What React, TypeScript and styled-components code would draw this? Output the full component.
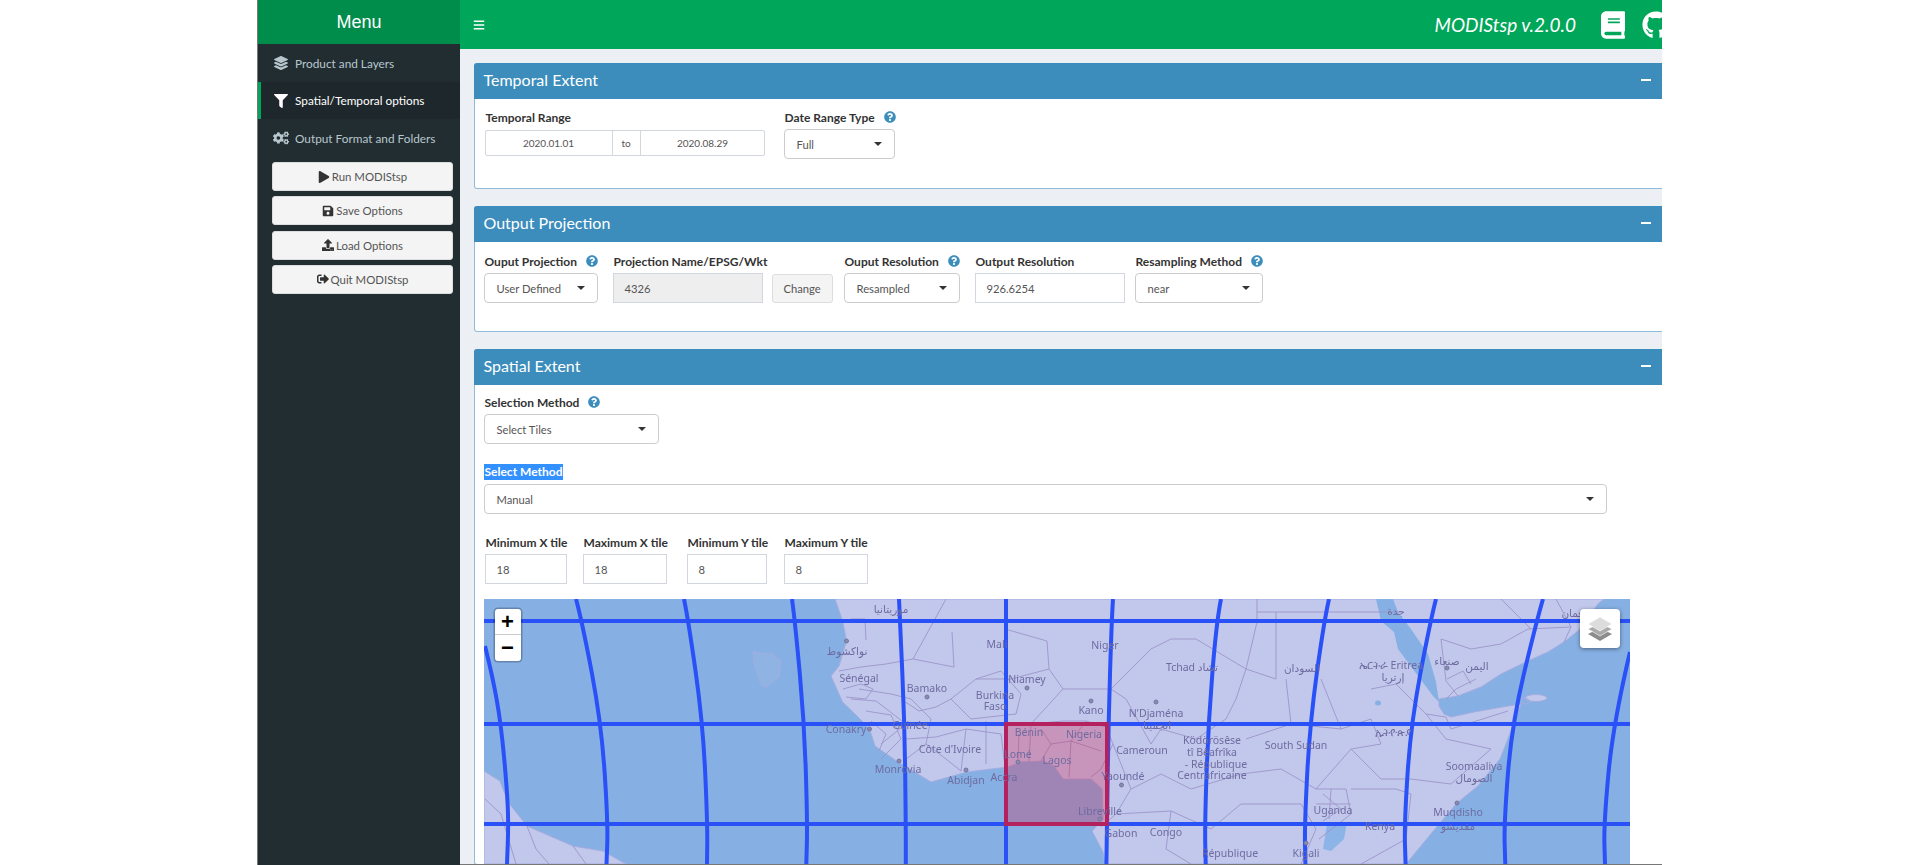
import React, { FC, ReactNode } from 'react';
import styled, { createGlobalStyle } from 'styled-components';
import {
	FaBars,
	FaBook,
	FaCogs,
	FaFilter,
	FaGithub,
	FaLayerGroup,
	FaPlay,
	FaQuestionCircle,
	FaSave,
	FaSignOutAlt,
	FaUpload,
} from 'react-icons/fa';

const GlobalStyle = createGlobalStyle`
	html, body {
		margin: 0;
		padding: 0;
		background: #fff;
		overflow: hidden;
	}
	* {
		box-sizing: border-box;
	}
`;

const Page = styled.div`
	display: flex;
	width: 1405px;
	height: 865px;
	margin-left: 257px;
	border-left: 1.5px solid #777;
	overflow: hidden;
	font-family: 'Lato', 'Liberation Sans', sans-serif;
`;

const Sidebar = styled.aside`
	flex: 0 0 202px;
	background: #222d32;
	display: flex;
	flex-direction: column;
`;

const Logo = styled.div`
	height: 44px;
	background: #008d4c;
	color: #fff;
	font-family: 'Liberation Sans', sans-serif;
	font-size: 18px;
	display: flex;
	align-items: center;
	justify-content: center;
`;

const NavItem = styled.div<{ $active?: boolean }>`
	height: ${(p) => (p.$active ? 37 : 38)}px;
	display: flex;
	align-items: center;
	column-gap: 6px;
	padding-left: ${(p) => (p.$active ? 12 : 15)}px;
	font-size: 11.8px;
	color: ${(p) => (p.$active ? '#fff' : '#b8c7ce')};
	background: ${(p) => (p.$active ? '#1e282c' : 'transparent')};
	border-left: ${(p) => (p.$active ? '3px solid #00a65a' : 'none')};

	svg {
		width: 16px;
		height: 14px;
		flex: none;
	}
`;

const SideButtons = styled.div`
	display: flex;
	flex-direction: column;
	row-gap: 5.3px;
	padding: 5px 7px 0 14px;
`;

const SideButton = styled.div`
	height: 29px;
	background: #f4f4f4;
	border: 1px solid #ddd;
	border-radius: 3px;
	color: #555;
	font-size: 11.4px;
	display: flex;
	align-items: center;
	justify-content: center;
	column-gap: 2px;

	svg {
		width: 12px;
		height: 12px;
		color: #333;
	}
`;

const Main = styled.main`
	flex: 0 0 1222px;
	height: 865px;
	background: #ecf0f5;
	border-bottom: 1px solid #777;
	overflow: hidden;
`;

const TopBar = styled.header`
	height: 49px;
	background: #00a65a;
	color: #fff;
	display: flex;
	align-items: center;
	padding: 0 12px 0 13px;
`;

const Burger = styled(FaBars)`
	width: 12px;
	height: 12px;
`;

const AppVersion = styled.div`
	margin-left: auto;
	font-size: 19px;
	font-style: italic;
	margin-right: 25px;
`;

const BookIcon = styled(FaBook)`
	width: 24px;
	height: 28px;
	margin-right: 17px;
`;

const GithubIcon = styled(FaGithub)`
	width: 28px;
	height: 28px;
`;

const Content = styled.div`
	display: flex;
	flex-direction: column;
	row-gap: 17px;
	padding: 14px 14px 0;
`;

const Box = styled.section<{ $height?: number }>`
	height: ${(p) => (p.$height ? `${p.$height}px` : 'auto')};
	background: #fff;
	border: 1.5px solid #8fbcdb;
	border-top: none;
	border-radius: 3px;
`;

const BoxHeader = styled.div`
	height: 36px;
	margin: 0 -1.5px;
	background: #3c8dbc;
	color: #fff;
	border-radius: 3px 3px 0 0;
	font-size: 16px;
	display: flex;
	align-items: center;
	justify-content: space-between;
	padding: 0 18px 3px 10px;
`;

const Collapse = styled.span`
	width: 10px;
	height: 2px;
	background: #fff;
`;

const BoxRow = styled.div<{ $top?: number; $left?: number }>`
	display: flex;
	align-items: flex-start;
	padding-top: ${(p) => p.$top ?? 0}px;
	padding-left: ${(p) => p.$left ?? 0}px;
`;

const Field = styled.div<{ $width: number; $gap?: number }>`
	flex: 0 0 ${(p) => p.$width}px;
	width: ${(p) => p.$width}px;
	margin-left: ${(p) => p.$gap ?? 0}px;
`;

const Label = styled.div`
	height: 16px;
	margin-bottom: 4px;
	padding-left: 1px;
	font-size: 12px;
	font-weight: 700;
	color: #333;
	white-space: nowrap;
	display: flex;
	align-items: center;
`;

const Help = styled(FaQuestionCircle)`
	width: 12px;
	height: 12px;
	color: #3c8dbc;
	margin-left: 9px;
	flex: none;
`;

const Highlight = styled.span`
	display: block;
	width: fit-content;
	height: 16px;
	line-height: 16px;
	margin-bottom: 4px;
	padding: 0 1px;
	background: #3390ff;
	color: #fff;
	font-size: 12px;
	font-weight: 700;
`;

const Select = styled.div`
	height: 30px;
	padding: 0 12px;
	background: #fff;
	border: 1px solid #ccc;
	border-radius: 4px;
	color: #555;
	font-size: 11.2px;
	display: flex;
	align-items: center;
	justify-content: space-between;

	&::after {
		content: '';
		border-top: 4px solid #333;
		border-left: 4px solid transparent;
		border-right: 4px solid transparent;
		margin-top: -1px;
	}
`;

const TextBox = styled.div<{ $disabled?: boolean }>`
	height: 30px;
	padding: 0 11px;
	background: ${(p) => (p.$disabled ? '#eee' : '#fff')};
	border: 1px solid #d2d6de;
	color: #555;
	font-size: 11.2px;
	display: flex;
	align-items: center;
`;

const ChangeButton = styled.div`
	height: 29px;
	margin-top: 21px;
	background: #f4f4f4;
	border: 1px solid #ddd;
	border-radius: 3px;
	color: #555;
	font-size: 11.2px;
	display: flex;
	align-items: center;
	justify-content: center;
`;

const DateRange = styled.div`
	display: flex;
	height: 26px;
	margin-top: 5px;
	border: 1px solid #d2d6de;
	border-radius: 2px;
	font-size: 10px;
	color: #555;
`;

const DatePart = styled.div<{ $width: number; $addon?: boolean }>`
	flex: 0 0 ${(p) => p.$width}px;
	display: flex;
	align-items: center;
	justify-content: center;
	border-left: ${(p) => (p.$addon ? '1px solid #d2d6de' : 'none')};
	border-right: ${(p) => (p.$addon ? '1px solid #d2d6de' : 'none')};
`;

const MapFrame = styled.div`
	position: relative;
	width: 1146px;
	height: 265px;
	margin: 15px 0 0 8.5px;
	overflow: hidden;
	background: #86b0e4;
`;

const MapSvg = styled.svg`
	display: block;
	width: 1146px;
	height: 265px;
	filter: blur(0.45px);
`;

const ZoomControl = styled.div`
	position: absolute;
	left: 11px;
	top: 10px;
	width: 26px;
	background: #fff;
	border-radius: 3px;
	box-shadow: 0 0 0 1.5px rgba(0, 0, 0, 0.25);
`;

const ZoomButton = styled.div<{ $last?: boolean }>`
	height: 26px;
	display: flex;
	align-items: center;
	justify-content: center;
	font-family: 'Liberation Sans', sans-serif;
	font-size: 22px;
	font-weight: 700;
	color: #000;
	border-bottom: ${(p) => (p.$last ? 'none' : '1px solid #ccc')};
`;

const LayersControl = styled.div`
	position: absolute;
	left: 1096px;
	top: 10px;
	width: 40px;
	height: 39px;
	background: #fff;
	border-radius: 4px;
	box-shadow: 0 1px 4px rgba(0, 0, 0, 0.45);
	display: flex;
	align-items: center;
	justify-content: center;
`;

type MapLabel = [string, number, number];

const labels: MapLabel[] = [
	['موريتانيا', 890, 614],
	['نواكشوط', 846, 656],
	['Sénégal', 858, 683],
	['Bamako', 926, 693],
	['Mali', 996, 649],
	['Niamey', 1026, 684],
	['Burkina', 994, 700],
	['Faso', 994, 711],
	['Conakry', 845, 734],
	['Guinée', 909, 730],
	["Côte d'Ivoire", 949, 754],
	['Monrovia', 897, 774],
	['Abidjan', 965, 785],
	['Accra', 1003, 782],
	['Bénin', 1028, 737],
	['Nigeria', 1083, 739],
	['Lomé', 1017, 759],
	['Lagos', 1056, 765],
	['Yaoundé', 1122, 781],
	['Libreville', 1099, 816],
	['Gabon', 1120, 838],
	['Congo', 1165, 837],
	['Niger', 1104, 650],
	['Kano', 1090, 715],
	["N'Djaména", 1155, 718],
	['انجمينا', 1156, 730],
	['Tchad تشاد', 1191, 672],
	['السودان', 1301, 673],
	['ኤርትራ Eritrea', 1390, 670],
	['إرتريا', 1392, 682],
	['صنعاء', 1446, 666],
	['اليمن', 1476, 671],
	['جدة', 1395, 616],
	['عمان', 1572, 618],
	['ኢትዮጵያ', 1392, 737],
	['Ködörösêse', 1211, 745],
	['tî Bêafrîka', 1211, 757],
	['- République', 1215, 769],
	['Centrafricaine', 1211, 780],
	['Cameroun', 1141, 755],
	['South Sudan', 1295, 750],
	['Soomaaliya', 1473, 771],
	['الصومال', 1473, 783],
	['Muqdisho', 1457, 817],
	['مقديشو', 1457, 831],
	['Uganda', 1332, 815],
	['Kenya', 1379, 831],
	['République', 1229, 858],
	['Kigali', 1305, 858],
];

const cities: [number, number][] = [
	[845.5, 642], [926, 698], [1026, 689], [868.5, 730], [898, 762], [965, 771], [1017, 763],
	[1120.5, 786], [1099, 820], [1155, 703], [1446, 669], [1456, 804], [1305, 844], [1090, 702],
];

const borders = [
	'850,620 864,620 865,641',
	'945,600 912,660 953,668 951,633',
	'838,672 860,668 885,665 912,660',
	'1004,630 1046,642 1048,670 1010,680 975,680',
	'950,700 975,680 1000,672 1020,695 1015,715 970,720 950,700',
	'858,690 890,695 910,700 930,720 925,745 905,760',
	'850,700 875,702 905,725 880,745',
	'865,712 890,716 900,740 880,760',
	'842,690 860,685 872,690 865,700 845,698',
	'870,722 885,735 878,752',
	'900,700 918,712 935,708 950,700',
	'905,740 935,738 965,730 1000,735',
	'925,745 945,760 960,772',
	'965,730 960,772',
	'985,722 985,765',
	'1000,735 1004,768',
	'1018,735 1017,762',
	'1030,725 1028,762',
	'1030,725 1062,722 1085,722 1105,728 1112,745 1100,770 1090,778',
	'1040,730 1050,745 1040,762',
	'1050,745 1070,742 1085,722',
	'1070,742 1068,778',
	'1070,742 1100,752',
	'1048,670 1062,690 1030,725',
	'1062,690 1110,690 1150,650 1170,640 1195,640 1245,670 1235,700 1225,720 1195,740 1160,730 1150,745 1125,700 1110,690',
	'1256,600 1256,623 1245,670 1275,680 1275,613 1256,613',
	'1275,613 1400,613',
	'1245,740 1290,725 1340,730 1370,720 1380,745 1350,750 1315,790',
	'1285,680 1290,725',
	'1320,680 1340,730',
	'1370,690 1395,685 1425,715 1445,740 1490,750 1450,785 1410,780 1380,780 1350,750',
	'1130,790 1160,775 1190,790 1240,775 1280,770 1315,790',
	'1112,745 1130,790 1115,815 1100,828',
	'1115,815 1170,812 1210,830 1240,805 1300,805 1315,830 1300,865',
	'1170,812 1165,850 1190,865',
	'1315,790 1345,790 1350,815 1318,840',
	'1322,795 1340,810 1322,822',
	'1330,790 1328,820',
	'1315,805 1350,805',
	'1350,790 1395,790 1410,795 1405,840 1360,865',
	'1440,640 1470,650 1500,645 1527,630 1570,628 1563,643',
	'1570,628 1555,600',
	'1500,600 1530,630',
	'1440,640 1445,682 1457,697',
	'1445,700 1455,690 1475,680',
	'1446,680 1462,672 1470,685',
	'484,800 500,815 515,865',
	'526,827 535,850 548,865',
	'572,847 585,865',
	'1425,715 1445,718 1450,730 1507,712',
];

const meridians = [
	'484,647 491.5,677 500,725 506,790 507.5,825 506,865',
	'575,600 581,622 600.5,725 607,825 605.5,865',
	'683,600 687.5,622 702,725 706.5,825 706,865',
	'791,600 794,622 803.4,725 806.4,825 805.3,865',
	'898,600 899,622 903.6,725 904.8,825 904.8,865',
	'1005,600 1005,865',
	'1112,600 1110.6,622 1107.5,725 1106,825 1105.4,865',
	'1220,600 1215.5,622 1207.3,725 1203.8,825 1204.7,865',
	'1328,600 1323,622 1308.8,725 1303.6,825 1304.4,865',
	'1435,600 1429.3,622 1409.8,725 1403.3,825 1404.6,865',
	'1542,600 1535.6,622 1510.8,725 1503,825 1504.3,865',
	'1629,653 1612,725 1602.8,825 1604,865',
];

// rounds the corners of a measured line by running through the midpoints
const smoothPath = (points: string) => {
	const pts = points.split(' ').map((p) => p.split(',').map(Number));
	let d = `M${pts[0][0]},${pts[0][1]}`;
	for (let i = 1; i < pts.length - 1; i++) {
		const midX = (pts[i][0] + pts[i + 1][0]) / 2;
		const midY = (pts[i][1] + pts[i + 1][1]) / 2;
		d += ` Q${pts[i][0]},${pts[i][1]} ${midX},${midY}`;
	}
	const last = pts[pts.length - 1];
	return `${d} L${last[0]},${last[1]}`;
};

const AFRICA =
	'M834,600 L841.6,622 L845.5,642 L838,667 L830,677 L841.6,703 L857,718 L868.5,730 L874,747 L897,763 L930,783 L966,773 L1007,768 L1020,763 L1043,762 L1053,767 L1062,780 L1090,780 L1101,790 L1102,820 L1091,832 L1102,853 L1104,865 L1405,865 L1434,830 L1456,804 L1477,787 L1499,760 L1505,745 L1520,705 L1507,707 L1473,713 L1450,718 L1443,715 L1438,707 L1438,700 L1457,697 L1480,688 L1500,675 L1527,662 L1547,653 L1563,643 L1577,632 L1597,605 L1603,600 Z';
const RED_SEA =
	'M1375,600 L1380,622 L1393,633 L1397,650 L1417,677 L1432,697 L1438,703 L1435,683 L1427,655 L1410,630 L1397,613 L1392,600 Z';
const SOUTH_AMERICA = 'M483,772 L499,782 L507,803 L526,827 L549,837 L572,847 L602,852 L625,865 L483,865 Z';

const TileMap: FC = () => (
	<MapSvg viewBox="483 600 1146 265">
		<rect x="483" y="600" width="1146" height="265" fill="#86b0e4" />
		<path d={AFRICA} fill="#c1c8ec" stroke="#a4acdf" strokeWidth="1" />
		<path d={SOUTH_AMERICA} fill="#c1c8ec" stroke="#a4acdf" strokeWidth="1" />
		<path d={RED_SEA} fill="#86b0e4" />
		<path d="M1326,825 L1346,823 L1343,840 L1330,852 L1322,850 Z" fill="#8db4e6" />
		<ellipse cx="1377" cy="704" rx="3" ry="2.5" fill="#86b0e4" />
		<path
			d="M752,652 L758,654 L771,655 L780,662 L778,678 L765,688 L760,686 L753,664 Z"
			fill="#8fb3e2"
			stroke="#a4acdf"
		/>
		<ellipse cx="1535" cy="699" rx="11" ry="3.5" fill="#c1c8ec" stroke="#a4acdf" />
		<path d="M1520,702 a4,3 0 1,0 8,0 a4,3 0 1,0 -8,0" fill="none" stroke="#a4acdf" />
		<g fill="none" stroke="#9d94cb" strokeWidth="0.9">
			{borders.map((points) => (
				<polyline key={points} points={points} />
			))}
		</g>
		<rect x="1005" y="725" width="101" height="100" fill="#d8204a" fillOpacity="0.3" />
		<g fill="none" stroke="#2a50f8" strokeWidth="4">
			<line x1="483" y1="622" x2="1629" y2="622" />
			<line x1="483" y1="725" x2="1629" y2="725" />
			<line x1="483" y1="825" x2="1629" y2="825" />
			{meridians.map((points) => (
				<path key={points} d={smoothPath(points)} />
			))}
		</g>
		<rect x="1005" y="725" width="101" height="100" fill="none" stroke="#b3215f" strokeWidth="4" />
		<g fill="#6e6ba0" fontFamily="'Noto Sans', 'DejaVu Sans', sans-serif" fontSize="10.5" textAnchor="middle">
			{labels.map(([text, x, y]) => (
				<text key={text} x={x} y={y}>
					{text}
				</text>
			))}
		</g>
		<g fill="#8b8bb0" stroke="#75759f" strokeWidth="1">
			{cities.map(([x, y]) => (
				<circle key={`${x}-${y}`} cx={x} cy={y} r="2" />
			))}
		</g>
	</MapSvg>
);

const LayersIcon: FC = () => (
	<svg width="26" height="26" viewBox="0 0 26 26">
		<path d="M13 12 L25 18 L13 25 L1 18 Z" fill="#8c8c8c" />
		<path d="M13 7 L25 13 L13 20 L1 13 Z" fill="#a9a9a9" stroke="#fff" strokeWidth="0.6" />
		<path d="M13 1 L25 8 L13 15 L1 8 Z" fill="#dcdcdc" stroke="#fff" strokeWidth="0.6" />
	</svg>
);

const FieldLabel: FC<{ children: ReactNode; help?: boolean }> = ({ children, help }) => (
	<Label>
		{children}
		{help && <Help />}
	</Label>
);

const App: FC = () => {
	return (
		<Page>
			<GlobalStyle />
			<Sidebar>
				<Logo>Menu</Logo>
				<NavItem>
					<FaLayerGroup />
					Product and Layers
				</NavItem>
				<NavItem $active>
					<FaFilter />
					Spatial/Temporal options
				</NavItem>
				<NavItem>
					<FaCogs />
					Output Format and Folders
				</NavItem>
				<SideButtons>
					<SideButton>
						<FaPlay />
						Run MODIStsp
					</SideButton>
					<SideButton>
						<FaSave />
						Save Options
					</SideButton>
					<SideButton>
						<FaUpload />
						Load Options
					</SideButton>
					<SideButton>
						<FaSignOutAlt />
						Quit MODIStsp
					</SideButton>
				</SideButtons>
			</Sidebar>
			<Main>
				<TopBar>
					<Burger />
					<AppVersion>MODIStsp v.2.0.0</AppVersion>
					<BookIcon />
					<GithubIcon />
				</TopBar>
				<Content>
					<Box $height={126}>
						<BoxHeader>
							Temporal Extent
							<Collapse />
						</BoxHeader>
						<BoxRow $top={10} $left={9.5}>
							<Field $width={280}>
								<FieldLabel>Temporal Range</FieldLabel>
								<DateRange>
									<DatePart $width={126}>2020.01.01</DatePart>
									<DatePart $width={29} $addon>
										to
									</DatePart>
									<DatePart $width={124}>2020.08.29</DatePart>
								</DateRange>
							</Field>
							<Field $width={111} $gap={19}>
								<FieldLabel help>Date Range Type</FieldLabel>
								<Select>Full</Select>
							</Field>
						</BoxRow>
					</Box>
					<Box $height={126}>
						<BoxHeader>
							Output Projection
							<Collapse />
						</BoxHeader>
						<BoxRow $top={11} $left={8.5}>
							<Field $width={114}>
								<FieldLabel help>Ouput Projection</FieldLabel>
								<Select>User Defined</Select>
							</Field>
							<Field $width={150} $gap={15}>
								<FieldLabel>Projection Name/EPSG/Wkt</FieldLabel>
								<TextBox $disabled>4326</TextBox>
							</Field>
							<Field $width={61} $gap={9}>
								<ChangeButton>Change</ChangeButton>
							</Field>
							<Field $width={116} $gap={11}>
								<FieldLabel help>Ouput Resolution</FieldLabel>
								<Select>Resampled</Select>
							</Field>
							<Field $width={150} $gap={15}>
								<FieldLabel>Output Resolution</FieldLabel>
								<TextBox>926.6254</TextBox>
							</Field>
							<Field $width={128} $gap={10}>
								<FieldLabel help>Resampling Method</FieldLabel>
								<Select>near</Select>
							</Field>
						</BoxRow>
					</Box>
					<Box>
						<BoxHeader>
							Spatial Extent
							<Collapse />
						</BoxHeader>
						<BoxRow $top={9} $left={8.5}>
							<Field $width={175}>
								<FieldLabel help>Selection Method</FieldLabel>
								<Select>Select Tiles</Select>
							</Field>
						</BoxRow>
						<BoxRow $top={20} $left={8.5}>
							<Field $width={1123}>
								<Highlight>Select Method</Highlight>
								<Select>Manual</Select>
							</Field>
						</BoxRow>
						<BoxRow $top={20} $left={9.5}>
							<Field $width={82}>
								<FieldLabel>Minimum X tile</FieldLabel>
								<TextBox>18</TextBox>
							</Field>
							<Field $width={84} $gap={16}>
								<FieldLabel>Maximum X tile</FieldLabel>
								<TextBox>18</TextBox>
							</Field>
							<Field $width={80} $gap={20}>
								<FieldLabel>Minimum Y tile</FieldLabel>
								<TextBox>8</TextBox>
							</Field>
							<Field $width={84} $gap={17}>
								<FieldLabel>Maximum Y tile</FieldLabel>
								<TextBox>8</TextBox>
							</Field>
						</BoxRow>
						<MapFrame>
							<TileMap />
							<ZoomControl>
								<ZoomButton>+</ZoomButton>
								<ZoomButton $last>−</ZoomButton>
							</ZoomControl>
							<LayersControl>
								<LayersIcon />
							</LayersControl>
						</MapFrame>
					</Box>
				</Content>
			</Main>
		</Page>
	);
};

export default App;
